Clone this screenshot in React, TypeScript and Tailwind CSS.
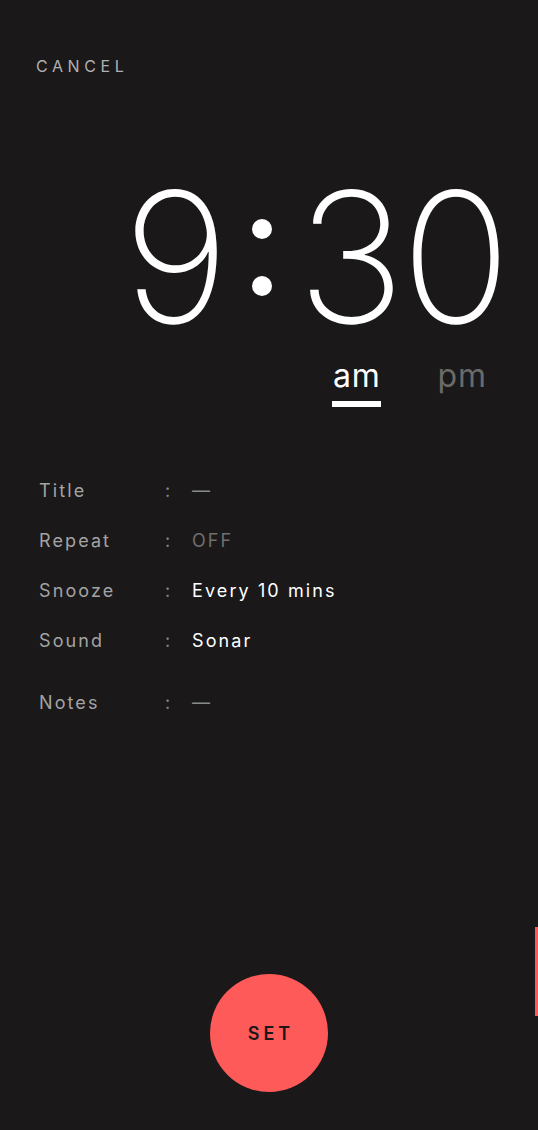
// App.tsx — alarm "set time" screen

const rows = [
  { label: 'Title', value: '—', tone: 'text-[#8a8a8a]' },
  { label: 'Repeat', value: 'OFF', tone: 'text-[#6f6f6f]' },
  { label: 'Snooze', value: 'Every 10 mins', tone: 'text-white' },
  { label: 'Sound', value: 'Sonar', tone: 'text-white' },
];

function InfoRow({ label, value, tone }: { label: string; value: string; tone: string }) {
  return (
    <div className="flex items-center h-[50px] text-[18px] tracking-[2.1px]">
      <span className="w-[126px] text-[#a3a3a3]">{label}</span>
      <span className="w-[27px] text-[#8a8a8a]">:</span>
      <span className={tone}>{value}</span>
    </div>
  );
}

export default function App() {
  return (
    <div
      className="relative w-[538px] h-[1130px] bg-[#1a1819] overflow-hidden flex flex-col"
      style={{ fontFamily: 'Inter, "Noto Sans", sans-serif' }}
    >
      {/* top bar */}
      <div className="pt-[54px] pl-[36px]">
        <button className="text-[16px] tracking-[4.6px] text-[#b0b0b0] leading-[20px]">CANCEL</button>
      </div>

      {/* time */}
      <div className="flex justify-end items-center pr-[31px] mt-[88px] h-[182px] text-white font-extralight text-[182px] leading-none">
        <span>9</span>
        <span className="flex flex-col gap-[37px] ml-[23px] mr-[25px]">
          <span className="w-[20px] h-[20px] rounded-full bg-white" />
          <span className="w-[20px] h-[20px] rounded-full bg-white" />
        </span>
        <span className="tracking-[-4px]">30</span>
      </div>

      {/* am / pm */}
      <div className="flex justify-end pr-[51px] mt-[8px] gap-[56px] text-[32px] leading-[40px]">
        <div className="flex flex-col items-center">
          <span className="text-white tracking-[1px]">am</span>
          <span className="w-[49px] h-[6px] bg-white mt-[5px]" />
        </div>
        <span className="text-[#6a6a6a] tracking-[1px]">pm</span>
      </div>

      {/* details */}
      <div className="pl-[39px] mt-[58px]">
        {rows.map((r) => (
          <InfoRow key={r.label} {...r} />
        ))}
        <div className="mt-[12px]">
          <InfoRow label="Notes" value="—" tone="text-[#8a8a8a]" />
        </div>
      </div>

      {/* set button */}
      <div className="mt-auto mb-[38px] flex justify-center">
        <button className="w-[118px] h-[118px] rounded-full bg-[#ff5a5a] text-[#1a1819] text-[18px] font-semibold tracking-[4px] pl-[4px]">
          SET
        </button>
      </div>

      {/* edge tab */}
      <span className="absolute right-0 top-[927px] w-[3px] h-[89px] bg-[#ff5a5a]" />
    </div>
  );
}
